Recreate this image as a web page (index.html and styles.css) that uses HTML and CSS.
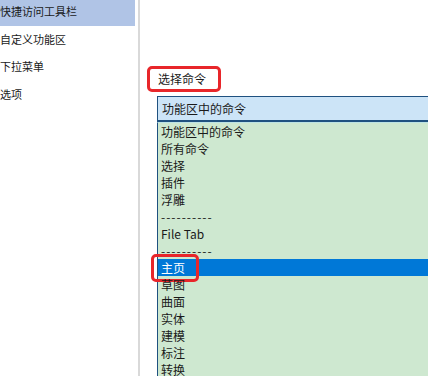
FILE: index.html
```html
<!DOCTYPE html>
<html lang="zh-CN">
<head>
<meta charset="utf-8">
<link rel="stylesheet" href="styles.css">
</head>
<body>
<div class="page">
  <nav class="sidebar">
    <div class="nav-item selected">快捷访问工具栏</div>
    <div class="nav-item">自定义功能区</div>
    <div class="nav-item">下拉菜单</div>
    <div class="nav-item">选项</div>
  </nav>
  <div class="divider"></div>
  <main class="main">
    <div class="label-row"><span class="label">选择命令</span></div>
    <div class="combo">功能区中的命令</div>
    <ul class="list">
      <li>功能区中的命令</li>
      <li>所有命令</li>
      <li>选择</li>
      <li>插件</li>
      <li>浮雕</li>
      <li class="dash">----------</li>
      <li>File Tab</li>
      <li class="dash">----------</li>
      <li class="active">主页<span class="mark"></span></li>
      <li>草图</li>
      <li>曲面</li>
      <li>实体</li>
      <li>建模</li>
      <li>标注</li>
      <li>转换</li>
    </ul>
  </main>
</div>
</body>
</html>
```
FILE: styles.css
```css
html, body {
  margin: 0;
  padding: 0;
  background: #ffffff;
}
body {
  font-family: "Noto Sans CJK SC", "Noto Sans", sans-serif;
  color: #1a1a1a;
}
.page {
  display: flex;
  width: 428px;
  height: 376px;
  overflow: hidden;
}
.sidebar {
  width: 135px;
  flex: none;
  margin-top: -2px;
  margin-right: 3px;
}
.nav-item {
  height: 27.5px;
  line-height: 27.5px;
  font-size: 11px;
  white-space: nowrap;
  padding-left: 0;
}
.nav-item.selected {
  background: #b0c4e6;
}
.divider {
  width: 2px;
  flex: none;
  background: #d9d9d9;
}
.main {
  flex: 1;
  min-width: 0;
  padding-top: 66px;
  padding-left: 7px;
  font-size: 12px;
}
.label-row {
  height: 26px;
}
.label {
  display: inline-block;
  box-sizing: border-box;
  height: 26px;
  line-height: 20px;
  padding: 0 12px 0 8px;
  border: 3px solid #e8262a;
  border-radius: 5px;
  font-size: 12px;
}
.combo {
  margin-top: 4px;
  margin-left: 10px;
  box-sizing: border-box;
  height: 26px;
  line-height: 23px;
  padding-left: 4px;
  background: #cce4f7;
  border-top: 1px solid #1f5180;
  border-left: 1px solid #1f5180;
  border-bottom: 2px solid #1f5180;
}
.list {
  list-style: none;
  margin: 0 0 0 10px;
  padding: 0;
  background: #cee8d0;
  border-left: 1px solid #1f5180;
  border-top: 1px solid #bde3e4;
}
.list li {
  position: relative;
  height: 17px;
  line-height: 17px;
  padding-left: 3px;
  white-space: nowrap;
}
.list li.dash {
  letter-spacing: 1px;
}
.list li.active {
  background: #0078d7;
  color: #ffffff;
}
.mark {
  position: absolute;
  left: -7px;
  top: -5px;
  width: 48px;
  height: 28px;
  box-sizing: border-box;
  border: 3px solid #e8262a;
  border-radius: 5px;
}
```
